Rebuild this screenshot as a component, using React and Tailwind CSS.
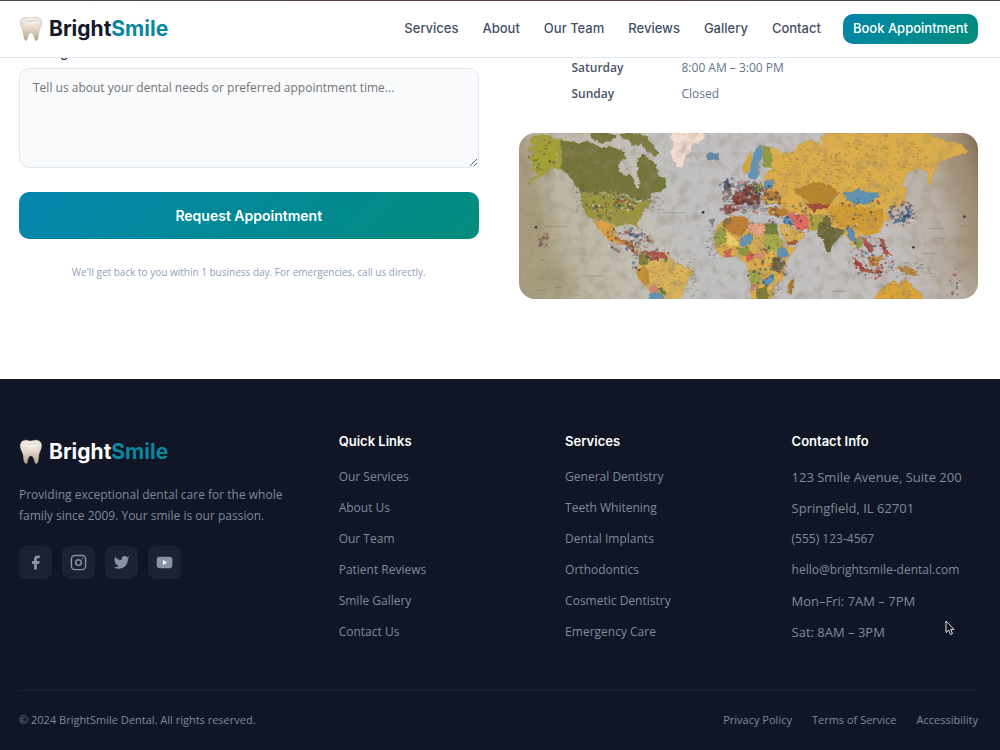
import React from 'react';

const NAV = ['Services', 'About', 'Our Team', 'Reviews', 'Gallery', 'Contact'];

const QUICK_LINKS = ['Our Services', 'About Us', 'Our Team', 'Patient Reviews', 'Smile Gallery', 'Contact Us'];

const SERVICES = [
  'General Dentistry',
  'Teeth Whitening',
  'Dental Implants',
  'Orthodontics',
  'Cosmetic Dentistry',
  'Emergency Care',
];

const CONTACT = [
  { text: '123 Smile Avenue, Suite 200' },
  { text: 'Springfield, IL 62701' },
  { text: '(555) 123-4567', href: 'tel:5551234567' },
  { text: 'hello@brightsmile-dental.com', href: 'mailto:hello@brightsmile-dental.com' },
  { text: 'Mon–Fri: 7AM – 7PM' },
  { text: 'Sat: 8AM – 3PM' },
];

const HOURS = [
  { day: 'Saturday', time: '8:00 AM – 3:00 PM' },
  { day: 'Sunday', time: 'Closed' },
];

// Map artwork, drawn back to front
const LAND = [
  // north america
  ['#a3a136', '62,36 95,28 125,38 152,44 152,130 165,142 150,134 130,130 112,140 95,152 75,160 48,178 60,162 80,150 60,130 70,118 55,105 60,92 80,88 60,78 52,66 75,62 60,50'],
  ['#75753a', '152,44 178,50 200,55 225,46 245,55 275,70 300,66 325,72 340,85 345,100 330,105 322,125 328,142 345,150 360,150 370,170 375,192 385,192 387,165 378,145 385,130 375,110 390,92 400,88 410,100 430,110 440,140 462,165 467,187 445,200 425,205 415,218 400,228 380,225 360,218 345,205 212,205 200,190 185,165 165,140 152,130'],
  ['#75753a', '238,24 290,24 318,32 300,50 272,55 248,45'],
  ['#7c7a3c', '325,24 385,24 405,38 430,62 447,85 430,92 410,80 390,58 368,62 352,45 335,40'],
  ['#99963c', '212,205 330,205 345,215 365,222 385,235 405,225 427,228 412,245 395,262 388,280 378,292 382,315 370,300 350,295 320,305 290,290 270,285 245,282 222,268 214,240'],
  ['#dba040', '246,284 275,288 295,295 312,304 311,325 322,342 345,345 330,358 300,348 280,330 262,308'],
  ['#b5703c', '330,346 348,346 364,352 372,374 384,384 376,386 360,372 345,360'],
  ['#4f7295', '345,322 362,324 385,330 395,336 380,338 358,332'],
  ['#b88a55', '400,338 420,344 432,352 412,352'],
  // greenland and iceland
  ['#f3ddd0', '484,24 594,24 575,45 548,60 530,85 520,110 512,132 498,125 488,105 478,92 488,60 478,40'],
  ['#5e86a8', '585,90 598,82 612,86 625,86 622,100 605,108 590,102'],
  // south america
  ['#dcb35a', '385,385 410,378 440,385 462,380 482,400 500,420 530,428 547,440 540,458 525,480 516,510 500,524 420,524 412,490 385,465 375,440 385,420'],
  ['#7f8440', '386,388 402,378 412,394 412,418 396,424 384,412'],
  ['#b4564b', '404,378 430,378 462,384 470,402 446,398 438,410 418,402'],
  ['#c69139', '376,434 398,424 412,436 415,476 398,478 382,455'],
  ['#d88474', '414,488 436,480 442,498 424,508'],
  ['#5f94b8', '416,508 440,500 456,510 458,524 414,524'],
  ['#6f7a3c', '440,490 456,488 468,508 452,508'],
  // africa
  ['#d9ac4e', '612,320 635,285 675,270 710,285 735,297 795,295 805,330 825,367 857,369 832,400 822,425 822,455 792,482 786,524 718,524 722,480 714,445 705,415 680,395 635,397 615,375 610,345'],
  ['#bd7f35', '636,288 675,271 708,280 712,308 690,336 662,322 640,305'],
  ['#8b7040', '632,292 650,276 662,278 658,296 638,306'],
  ['#9ba045', '612,322 630,306 646,312 646,352 618,362 610,346'],
  ['#ebca69', '646,320 680,342 684,362 660,366 646,352'],
  ['#eaa58b', '710,290 735,297 762,298 762,328 738,334 712,316'],
  ['#75803e', '762,296 795,295 803,328 762,328'],
  ['#5d97bd', '686,348 704,330 724,326 726,346 706,364 690,362'],
  ['#a8ad4a', '762,328 805,330 812,348 802,374 770,378 758,352'],
  ['#8c973f', '684,370 712,366 722,380 708,394 684,388'],
  ['#d65c58', '642,378 660,374 662,396 642,396'],
  ['#d65c58', '706,392 724,378 728,398 712,410'],
  ['#e8907a', '732,388 752,380 762,388 750,400 734,400'],
  ['#5a92b9', '798,376 814,362 828,376 838,390 818,400 800,396'],
  ['#6a6340', '784,400 808,396 822,418 808,444 788,438'],
  ['#9da64a', '718,436 750,440 746,478 720,476'],
  ['#5a92b9', '752,464 772,460 784,448 792,462 780,478 762,482'],
  ['#cf7b58', '722,480 740,482 738,496 724,494'],
  ['#7d7c3a', '738,492 764,486 776,510 764,524 740,524'],
  ['#a9772e', '835,470 850,462 850,484 840,508 830,500'],
  // europe
  ['#d9a642', '695,128 708,96 725,78 722,112 712,140 698,146'],
  ['#5e94ba', '712,150 722,112 732,72 754,60 754,90 744,118 744,150 728,166 716,162'],
  ['#8f9a42', '756,62 778,62 784,100 782,126 758,128 754,96'],
  ['#8b4335', '668,208 690,196 716,184 730,192 728,224 710,236 680,240 662,224'],
  ['#a44a3f', '640,242 668,238 676,254 660,266 640,264'],
  ['#5a6f8e', '634,170 648,162 660,176 656,194 640,192'],
  ['#7f4b3f', '705,174 738,182 752,204 748,236 724,244 705,232'],
  ['#99963c', '728,178 752,172 760,190 744,206 730,196'],
  // asia
  ['#dcae4b', '782,62 800,74 814,86 842,82 858,70 868,56 902,46 940,62 928,40 950,24 1248,24 1280,38 1310,48 1350,58 1372,80 1345,94 1312,100 1282,118 1268,142 1260,186 1248,168 1252,142 1210,130 1188,148 1174,175 1190,192 1186,218 1170,245 1150,258 1146,242 1126,258 1136,282 1118,300 1108,322 1076,334 1048,330 1036,346 1030,376 1020,352 1004,330 984,330 962,320 950,312 900,318 872,300 838,262 800,236 762,236 752,218 770,190 756,160 770,140 784,126'],
  ['#b9852f', '852,196 880,184 906,176 932,170 956,182 984,202 972,222 956,240 930,234 900,236 880,222 858,210'],
  ['#5c93b6', '996,200 1020,204 1042,192 1074,204 1100,202 1104,214 1086,228 1064,238 1040,236 1010,226'],
  ['#a34d39', '880,236 920,236 958,238 950,254 924,250 912,262'],
  ['#d29c34', '948,250 990,236 1030,248 1080,250 1118,262 1112,300 1098,324 1070,332 1040,312 1000,306 966,286'],
  ['#5f94ba', '764,166 788,164 788,184 770,190 762,180'],
  ['#bd8337', '760,196 796,200 812,222 792,226 764,216'],
  ['#b8812f', '772,250 800,246 830,252 832,268 806,278 776,268'],
  ['#e3685e', '834,260 852,258 862,270 890,268 896,308 872,318 848,300 838,280'],
  ['#5e94ba', '818,280 834,270 846,292 838,304 822,296'],
  ['#dcb24e', '804,300 822,296 850,310 876,326 884,332 862,350 834,362 824,346 810,320'],
  ['#a0553b', '828,354 858,344 862,352 834,366'],
  ['#a9a043', '898,268 930,270 942,264 936,294 920,314 900,314'],
  ['#6f6b37', '920,312 938,276 956,276 964,302 1002,316 992,332 974,344 964,364 958,384 946,376 936,342 922,332'],
  ['#5f8cb2', '1004,310 1024,308 1034,328 1034,352 1020,348 1012,332'],
  ['#8e9a42', '1034,340 1050,336 1056,356 1044,376 1034,366'],
  ['#b24e46', '1052,334 1074,352 1090,374 1082,384 1062,362'],
  ['#b24e46', '1104,336 1120,344 1126,374 1140,390 1126,392 1112,362'],
  ['#a4473a', '1024,394 1044,410 1066,436 1056,440 1036,424'],
  ['#c08a3a', '1070,400 1100,392 1118,394 1104,420 1082,424'],
  ['#a5543d', '1062,432 1100,436 1128,442 1096,446 1064,440'],
  ['#c08a3a', '1158,426 1184,424 1210,436 1220,450 1190,448 1168,438'],
  ['#4c6f9c', '1150,284 1172,278 1190,258 1198,240 1204,262 1192,280 1164,294'],
  ['#8a6a63', '1132,262 1144,254 1150,270 1142,282'],
  ['#dca53a', '1090,524 1098,504 1122,486 1146,468 1166,478 1182,464 1200,474 1208,490 1230,502 1236,524'],
];

// [cx, cy, rx, ry, count, palette]
const INK = ['#3a3230', '#55504c', '#2b3a52', '#6b5a48'];
const SOIL = ['#7d6330', '#94722f', '#6a5a34', '#a8843c'];
const PINS = ['#23324f', '#a83a34', '#3a2b2b', '#35608c', '#d8d4cf', '#7a2e2b'];
const CLUSTERS = [
  [290, 240, 75, 42, 120, PINS],
  [350, 235, 35, 22, 60, PINS],
  [350, 345, 75, 38, 120, PINS],
  [210, 220, 22, 60, 40, INK],
  [430, 235, 35, 25, 40, INK],
  [250, 110, 100, 75, 45, INK],
  [100, 95, 48, 50, 30, PINS],
  [470, 435, 75, 60, 120, SOIL],
  [540, 470, 22, 45, 30, INK],
  [380, 400, 22, 40, 30, PINS],
  [430, 390, 48, 24, 50, PINS],
  [700, 215, 65, 50, 330, PINS],
  [660, 185, 35, 25, 70, PINS],
  [655, 250, 25, 20, 45, PINS],
  [760, 225, 50, 45, 130, PINS],
  [715, 340, 95, 55, 80, INK],
  [605, 350, 22, 50, 40, INK],
  [770, 440, 60, 75, 110, PINS],
  [840, 285, 70, 55, 90, PINS],
  [890, 140, 120, 70, 220, SOIL],
  [1100, 100, 150, 70, 220, SOIL],
  [1100, 110, 160, 80, 40, INK],
  [1060, 240, 120, 75, 160, SOIL],
  [1060, 270, 90, 55, 50, PINS],
  [950, 320, 40, 50, 80, INK],
  [1175, 265, 42, 38, 120, PINS],
  [1080, 400, 70, 65, 140, PINS],
  [1190, 435, 75, 25, 55, INK],
  [1160, 495, 60, 30, 55, SOIL],
  [97, 348, 20, 28, 28, PINS],
  [1335, 470, 22, 40, 16, PINS],
];

const STAINS = [
  [50, 110, 90, 100], [60, 300, 70, 150], [120, 460, 130, 60],
  [1340, 150, 60, 130], [1330, 400, 110, 110], [1390, 300, 60, 200],
];

// small repeatable generator so the pins stay put between renders
function makeRandom(seed) {
  let s = seed;
  return () => {
    s = (s * 16807) % 2147483647;
    return s / 2147483647;
  };
}

const rand = makeRandom(2009);
const MARKS = CLUSTERS.flatMap(([cx, cy, rx, ry, count, colors]) =>
  Array.from({ length: count }, () => {
    const a = rand() * Math.PI * 2;
    const r = Math.sqrt(rand());
    return {
      x: Math.round(cx + Math.cos(a) * r * rx),
      y: Math.round(cy + Math.sin(a) * r * ry),
      w: Math.round(2 + rand() * 7),
      h: Math.round(1 + rand() * 3),
      pin: colors === PINS && rand() > 0.5,
      color: colors[Math.floor(rand() * colors.length)],
    };
  })
);

const LABELS = [
  [104, 305, 66], [214, 453, 64], [456, 263, 68], [88, 406, 16], [82, 497, 22], [132, 487, 22],
  [188, 510, 18], [964, 499, 44], [1256, 310, 44], [1284, 340, 18], [1234, 385, 44], [1350, 304, 16],
];

const WorldMap = () => (
  <svg
    role="img"
    aria-label="World map"
    viewBox="24 24 1380 498"
    preserveAspectRatio="xMidYMid slice"
    className="block w-full h-[166px] rounded-2xl"
  >
    <defs>
      <linearGradient id="sea" x1="0" x2="1" y1="0.1" y2="0">
        <stop offset="0" stopColor="#aaa184" />
        <stop offset="0.06" stopColor="#bcb6a4" />
        <stop offset="0.2" stopColor="#c4bfb5" />
        <stop offset="0.32" stopColor="#c1c0c1" />
        <stop offset="0.75" stopColor="#c2bebd" />
        <stop offset="0.87" stopColor="#b8aea2" />
        <stop offset="0.95" stopColor="#a29079" />
        <stop offset="1" stopColor="#7d6850" />
      </linearGradient>
      <radialGradient id="stain">
        <stop offset="0" stopColor="#8a7450" stopOpacity="0.2" />
        <stop offset="1" stopColor="#8a7450" stopOpacity="0" />
      </radialGradient>
      <filter id="coast" x="-5%" y="-5%" width="110%" height="110%">
        <feTurbulence type="fractalNoise" baseFrequency="0.07" numOctaves="3" seed="4" />
        <feDisplacementMap in="SourceGraphic" scale="14" xChannelSelector="R" yChannelSelector="G" />
      </filter>
      <filter id="paper" x="0" y="0" width="100%" height="100%">
        <feTurbulence type="fractalNoise" baseFrequency="0.03" numOctaves="4" seed="9" />
        <feColorMatrix values="0 0 0 0 0.3  0 0 0 0 0.24  0 0 0 0 0.16  0 0 0 1.6 -0.72" />
      </filter>
    </defs>
    <rect x="24" y="24" width="1380" height="498" fill="url(#sea)" />
    {STAINS.map(([cx, cy, rx, ry]) => (
      <ellipse key={`${cx}-${cy}`} cx={cx} cy={cy} rx={rx} ry={ry} fill="url(#stain)" />
    ))}
    <g filter="url(#coast)" strokeWidth="1" stroke="#6d5a35" strokeOpacity="0.35">
      {LAND.map(([fill, points]) => (
        <polygon key={points} points={points} fill={fill} />
      ))}
    </g>
    <g opacity="0.55">
      {MARKS.map((m, i) =>
        m.pin ? (
          <circle key={i} cx={m.x} cy={m.y} r={m.h + 1} fill={m.color} />
        ) : (
          <path key={i} d={`M${m.x} ${m.y}l${m.w} ${m.h - 2}`} stroke={m.color} strokeWidth="2" />
        )
      )}
    </g>
    <g stroke="#57504a" strokeWidth="2" strokeDasharray="5 2" opacity="0.6">
      {LABELS.map(([x, y, w]) => (
        <path key={`${x}-${y}`} d={`M${x} ${y}h${w}`} />
      ))}
    </g>
    <g fill="#27324a">
      <circle cx="76" cy="307" r="4" />
      <circle cx="577" cy="262" r="4" />
      <circle cx="1208" cy="367" r="4" />
      <circle cx="1361" cy="275" r="4" />
    </g>
    <path d="M592 284l22 -4l-8 24z" fill="#7e858a" />
    <rect x="24" y="24" width="1380" height="498" filter="url(#paper)" opacity="0.6" />
  </svg>
);

const Tooth = () => (
  <svg viewBox="0 0 24 26" aria-hidden="true" className="w-6 h-[26px] shrink-0">
    <defs>
      <linearGradient id="enamel" x1="0" x2="0" y1="0" y2="1">
        <stop offset="0" stopColor="#eee7df" />
        <stop offset="0.45" stopColor="#e5dacb" />
        <stop offset="0.75" stopColor="#cdbba5" />
        <stop offset="1" stopColor="#b3a18c" />
      </linearGradient>
      <radialGradient id="shine" cx="0.5" cy="0.35" r="0.6">
        <stop offset="0" stopColor="#fff" stopOpacity="0.7" />
        <stop offset="1" stopColor="#fff" stopOpacity="0" />
      </radialGradient>
    </defs>
    <path
      d="M6 1.2C8 .8 9.500 2 11.500 2S15.500.7 18 1.200C21.500 1.800 23 4.300 22.600 7.500C22.300 10.500 20.600 12.500 20 15.500C19.500 18.500 19.600 22 18.300 24C17.500 25.200 16.400 24.800 15.800 23C15 20.500 14.300 16.800 11.900 16.800S9 20.500 8.300 23C7.700 24.900 6.600 25 5.800 23.800C4.500 21.800 4.600 18.300 4 15.500C3.300 12.500 1.500 10.600 1.200 7.500C.9 4.200 2.500 1.700 6 1.200Z"
      fill="url(#enamel)"
      stroke="#b5a693"
      strokeWidth="0.4"
    />
    <ellipse cx="12" cy="7" rx="9" ry="5" fill="url(#shine)" />
    <path d="M7 4.500C9 5.500 10 5.600 12 5.300S15.500 4.300 17 4.300" fill="none" stroke="#cbbdab" strokeWidth="0.7" />
  </svg>
);

const Logo = ({ className }) => (
  <a href="#" className={`flex items-center gap-1.5 font-[Inter] text-[21px] leading-8 font-bold ${className}`}>
    <Tooth />
    <span>
      Bright<span className="text-[#0b87a0]">Smile</span>
    </span>
  </a>
);

const SocialLink = ({ label, children }) => (
  <a
    href="#"
    aria-label={label}
    className="flex h-[33px] w-[33px] items-center justify-center rounded-lg bg-[#1b2231] text-[#8793a6]"
  >
    <svg viewBox="0 0 24 24" className="h-[17px] w-[17px]" fill="currentColor" aria-hidden="true">
      {children}
    </svg>
  </a>
);

const FooterColumn = ({ title, children }) => (
  <div>
    <h3 className="font-[Inter] text-[13px] leading-5 font-semibold text-white">{title}</h3>
    <ul className="mt-4 flex flex-col gap-[11px] leading-5">{children}</ul>
  </div>
);

export default function App() {
  return (
    <div className="relative bg-white font-['Open_Sans',sans-serif] text-slate-500">
      <header className="fixed inset-x-0 top-0 z-10 border-b border-[#e2eaf3] bg-white">
        <div className="h-px bg-linear-to-r from-[#4d4a4a] via-[#5c3f3c] to-[#454348]" />
        <div className="flex h-14 items-center justify-between pl-[19px] pr-[22px]">
          <Logo className="text-[#14182b]" />
          <nav className="flex items-center gap-6 font-[Inter] text-[13px] font-medium text-[#455066]">
            {NAV.map((item) => (
              <a key={item} href="#">{item}</a>
            ))}
            <button
              type="button"
              className="-ml-0.5 h-[30px] rounded-[10px] bg-linear-135 from-[#0586a9] to-[#048c7c] px-2.5 text-white"
            >
              Book Appointment
            </button>
          </nav>
        </div>
      </header>

      <main className="grid grid-cols-2 gap-10 pt-[42px] pb-20 pl-[19px] pr-[22px]">
        <form className="flex flex-col">
          <label htmlFor="message" className="mb-1.5 font-[Inter] text-[13px] leading-5 font-medium text-[#1e293b]">
            Message
          </label>
          <textarea
            id="message"
            placeholder="Tell us about your dental needs or preferred appointment time..."
            className="h-[100px] w-full rounded-[10px] border border-[#e0e8f0] bg-[#f8fafc] px-[13px] py-[9px] text-[12px] leading-5 placeholder:text-[#757575]"
          />
          <button
            type="button"
            className="mt-6 h-[47px] rounded-[10px] bg-linear-135 from-[#0586ae] to-[#048c7c] font-[Inter] text-[14px] font-semibold text-white"
          >
            Request Appointment
          </button>
          <p className="mt-[23px] text-center text-[10px] leading-5 text-slate-400">
            We'll get back to you within 1 business day. For emergencies, call us directly.
          </p>
        </form>

        <div className="pt-[13px]">
          <table className="ml-[53px] text-[12px]">
            <tbody>
              {HOURS.map((h) => (
                <tr key={h.day} className="h-[26px]">
                  <th scope="row" className="w-[110px] text-left font-semibold text-[#475569]">{h.day}</th>
                  <td>{h.time}</td>
                </tr>
              ))}
            </tbody>
          </table>
          <div className="mt-[26px]">
            <WorldMap />
          </div>
        </div>
      </main>

      <footer className="bg-[#101625] pt-[52px] pl-[19px] pr-[22px] text-[12px] text-[#7f8a9c]">
        <div className="grid grid-cols-[1.5fr_1fr_1fr_1fr] gap-10">
          <div className="pt-[5px]">
            <Logo className="text-white" />
            <p className="mt-4 leading-[21px]">
              Providing exceptional dental care for the whole family since 2009. Your smile is our passion.
            </p>
            <div className="mt-5 flex gap-2.5">
              <SocialLink label="Facebook">
                <path d="M18 2h-3a5 5 0 0 0-5 5v3H7v4h3v8h4v-8h3l1-4h-4V7a1 1 0 0 1 1-1h3z" />
              </SocialLink>
              <SocialLink label="Instagram">
                <rect x="2" y="2" width="20" height="20" rx="5" fill="none" stroke="currentColor" strokeWidth="2" />
                <circle cx="12" cy="12" r="4" fill="none" stroke="currentColor" strokeWidth="2" />
                <circle cx="17.500" cy="6.500" r="1" />
              </SocialLink>
              <SocialLink label="Twitter">
                <path d="M23 3a10.900 10.900 0 0 1-3.140 1.530 4.480 4.480 0 0 0-7.860 3v1A10.660 10.660 0 0 1 3 4s-4 9 5 13a11.640 11.640 0 0 1-7 2c9 5 20 0 20-11.500a4.500 4.500 0 0 0-.08-.83A7.720 7.720 0 0 0 23 3z" />
              </SocialLink>
              <SocialLink label="YouTube">
                <rect x="1" y="4" width="22" height="16" rx="4" />
                <path d="M9.750 15.500l5.750-3.500-5.750-3.500z" fill="#fff" />
              </SocialLink>
            </div>
          </div>

          <FooterColumn title="Quick Links">
            {QUICK_LINKS.map((item) => (
              <li key={item}><a href="#">{item}</a></li>
            ))}
          </FooterColumn>

          <FooterColumn title="Services">
            {SERVICES.map((item) => (
              <li key={item}><a href="#">{item}</a></li>
            ))}
          </FooterColumn>

          <FooterColumn title="Contact Info">
            {CONTACT.map((c) => (
              <li key={c.text} className={c.href ? '' : 'text-[13px]'}>
                {c.href ? <a href={c.href}>{c.text}</a> : c.text}
              </li>
            ))}
          </FooterColumn>
        </div>

        <div className="mt-12 flex items-center justify-between border-t border-[#1d2433] pt-[19px] pb-5 text-[11px] leading-5">
          <p>© 2024 BrightSmile Dental. All rights reserved.</p>
          <div className="flex gap-5">
            <a href="#">Privacy Policy</a>
            <a href="#">Terms of Service</a>
            <a href="#">Accessibility</a>
          </div>
        </div>
      </footer>

      {/* pointer */}
      <svg viewBox="0 0 10 16" aria-hidden="true" className="absolute top-[620px] left-[945px] h-4 w-2.5">
        <path
          d="M1 1v11.500l2.600-2.400 1.900 4.400 2-.9-1.900-4.200h3.400z"
          fill="#0a0d16"
          stroke="#e5e7eb"
          strokeWidth="1"
          strokeLinejoin="round"
        />
      </svg>
    </div>
  );
}
